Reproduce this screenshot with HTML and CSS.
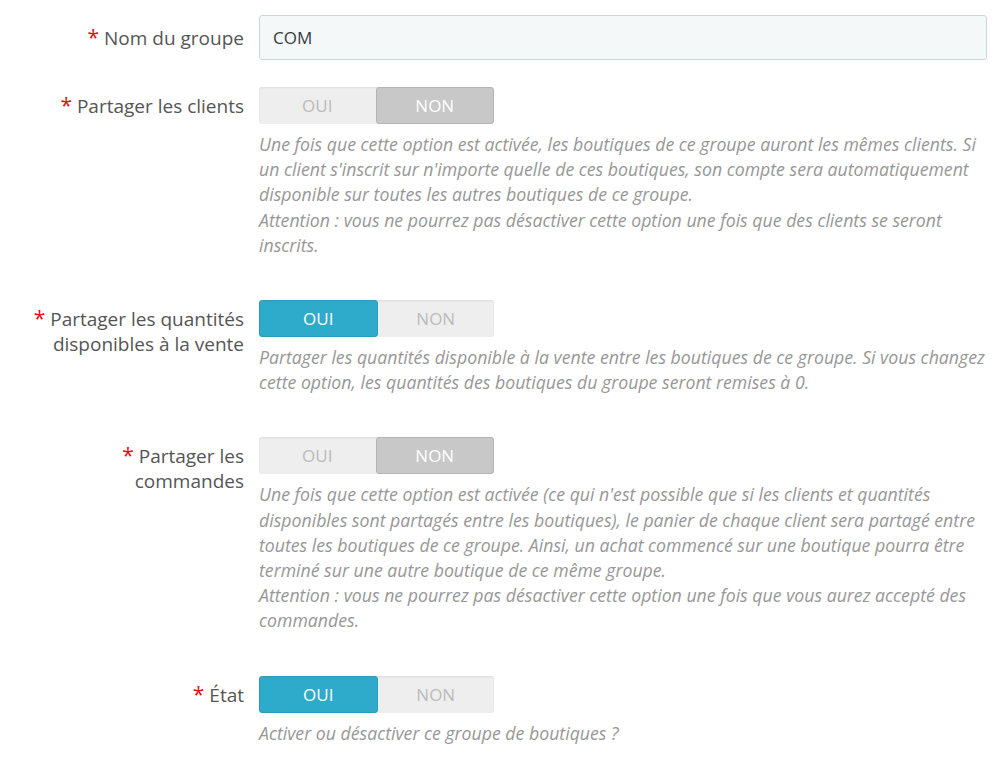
FILE: index.html
```html
<!DOCTYPE html>
<html lang="fr">
<head>
    <meta charset="UTF-8">
    <title>Groupe de boutiques</title>
    <link rel="stylesheet" href="styles.css">
</head>
<body>
    <form class="shop-form">
        <div class="form-group">
            <label class="control-label label-input"><span class="required">*</span> Nom du groupe</label>
            <div class="control">
                <input type="text" class="text-input" value="COM">
            </div>
        </div>

        <div class="form-group">
            <label class="control-label"><span class="required">*</span> Partager les clients</label>
            <div class="control">
                <div class="switch">
                    <span class="switch-opt">OUI</span>
                    <span class="switch-opt off-active">NON</span>
                </div>
                <p class="help-block">Une fois que cette option est activée, les boutiques de ce groupe auront les mêmes clients. Si un client s'inscrit sur n'importe quelle de ces boutiques, son compte sera automatiquement disponible sur toutes les autres boutiques de ce groupe.<br>Attention : vous ne pourrez pas désactiver cette option une fois que des clients se seront inscrits.</p>
            </div>
        </div>

        <div class="form-group">
            <label class="control-label"><span class="required">*</span> Partager les quantités disponibles à la vente</label>
            <div class="control">
                <div class="switch">
                    <span class="switch-opt on-active">OUI</span>
                    <span class="switch-opt">NON</span>
                </div>
                <p class="help-block">Partager les quantités disponible à la vente entre les boutiques de ce groupe. Si vous changez cette option, les quantités des boutiques du groupe seront remises à 0.</p>
            </div>
        </div>

        <div class="form-group">
            <label class="control-label"><span class="required">*</span> Partager les commandes</label>
            <div class="control">
                <div class="switch">
                    <span class="switch-opt">OUI</span>
                    <span class="switch-opt off-active">NON</span>
                </div>
                <p class="help-block">Une fois que cette option est activée (ce qui n'est possible que si les clients et quantités disponibles sont partagés entre les boutiques), le panier de chaque client sera partagé entre toutes les boutiques de ce groupe. Ainsi, un achat commencé sur une boutique pourra être terminé sur une autre boutique de ce même groupe.<br>Attention : vous ne pourrez pas désactiver cette option une fois que vous aurez accepté des commandes.</p>
            </div>
        </div>

        <div class="form-group">
            <label class="control-label"><span class="required">*</span> État</label>
            <div class="control">
                <div class="switch">
                    <span class="switch-opt on-active">OUI</span>
                    <span class="switch-opt">NON</span>
                </div>
                <p class="help-block">Activer ou désactiver ce groupe de boutiques ?</p>
            </div>
        </div>
    </form>
</body>
</html>
```

FILE: styles.css
```css
body {
    margin: 0;
    padding: 0;
    background-color: #fff;
    font-family: "Open Sans", "Liberation Sans", sans-serif;
    color: #555;
}

.shop-form {
    padding-top: 15px;
}

.form-group {
    display: flex;
    align-items: flex-start;
    margin-bottom: 27px;
}

.control-label {
    width: 259px;
    flex-shrink: 0;
    padding: 6px 15px 0 24px;
    box-sizing: border-box;
    text-align: right;
    font-size: 19px;
    line-height: 25px;
}

.control-label.label-input {
    padding-top: 10px;
}

.control-label .required {
    color: #e50f0f;
    font-size: 21px;
}

.control {
    width: 728px;
}

.text-input {
    display: block;
    width: 100%;
    height: 45px;
    box-sizing: border-box;
    padding: 0 13px;
    font-family: inherit;
    font-size: 17px;
    color: #363a41;
    background-color: #f4f8f9;
    border: 1px solid #c9d6da;
    border-radius: 3px;
    outline: none;
}

.switch {
    display: flex;
    width: 235px;
    height: 37px;
    background-color: #eee;
    border-radius: 3px;
    box-shadow: inset 0 1px 2px rgba(0, 0, 0, 0.08);
}

.switch-opt {
    flex: 1;
    display: flex;
    align-items: center;
    justify-content: center;
    font-size: 17px;
    color: #bbb;
    border-radius: 3px;
}

.switch-opt.on-active {
    background-color: #2eaacb;
    border: 1px solid #2a9bbb;
    color: #fff;
}

.switch-opt.off-active {
    background-color: #c8c8c8;
    border: 1px solid #b4b4b4;
    color: #fff;
}

.help-block {
    margin: 8px 0 15px;
    font-size: 17.7px;
    line-height: 25.2px;
    font-style: italic;
    color: #979797;
}
```
